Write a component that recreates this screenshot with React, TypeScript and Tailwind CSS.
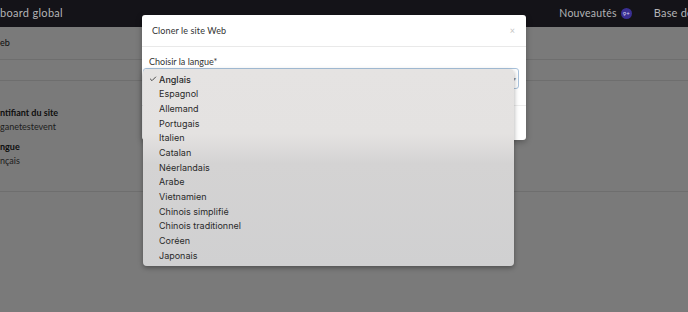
import { Check } from "lucide-react";

const languages = [
  "Anglais",
  "Espagnol",
  "Allemand",
  "Portugais",
  "Italien",
  "Catalan",
  "Néerlandais",
  "Arabe",
  "Vietnamien",
  "Chinois simplifié",
  "Chinois traditionnel",
  "Coréen",
  "Japonais",
];

export default function App() {
  return (
    <div className="relative w-[688px] h-[312px] overflow-hidden bg-white font-['Lato','Noto_Sans',sans-serif]">
      {/* Navbar */}
      <div className="h-[27px] bg-[#141318] flex items-center justify-between text-[11px] text-[#b3b3b6]">
        <span className="tracking-[0.3px]">board global</span>
        <div className="flex items-center gap-[22px] -mr-[5px]">
          <span className="flex items-center gap-[4px] text-[10.5px] tracking-[0.2px]">
            Nouveautés
            <span className="w-[11px] h-[11px] rounded-full bg-[#3a2f93] text-[6px] text-[#d6d3f0] flex items-center justify-center tracking-normal">
              9+
            </span>
          </span>
          <span className="whitespace-nowrap tracking-[0.2px]">Base de</span>
        </div>
      </div>

      {/* Page content */}
      <div className="text-[9px] text-[#222]">
        <div className="h-[33px] flex items-center border-b border-[#e6e6e6]">eb</div>
        <div className="h-[21px] border-b border-[#e6e6e6]"></div>
        <div className="pt-[25px] pb-[24px] border-b border-[#e6e6e6] flex flex-col">
          <span className="font-bold leading-[14px]">ntifiant du site</span>
          <span className="leading-[14px] text-[#444]">ganetestevent</span>
          <span className="font-bold leading-[14px] mt-[6px]">ngue</span>
          <span className="leading-[13px] text-[#444]">nçais</span>
        </div>
      </div>

      {/* Overlay */}
      <div className="absolute left-0 right-0 top-[27px] bottom-0 bg-[#000]/[0.52]"></div>

      {/* Modal */}
      <div className="absolute left-[142px] top-[15px] w-[384px] h-[125px] bg-white rounded-[3px] shadow-[0_2px_6px_rgba(0,0,0,0.3)] flex flex-col">
        <div className="h-[32px] flex items-center justify-between px-[10px] border-b border-[#e9e9e9]">
          <span className="text-[9px] text-[#333] tracking-[0.1px]">Cloner le site Web</span>
          <span className="text-[9px] text-[#c4c4c4] mr-[1px]">×</span>
        </div>
        <div className="px-[7px] pt-[8px]">
          <div className="text-[9px] text-[#333] leading-[13px]">Choisir la langue*</div>
          <div className="h-[21px] w-[376px] -ml-[6px] border border-[#a9c3dd] rounded-[3px] bg-white flex items-center justify-end pr-[2px]">
            <span className="text-[6px] text-[#999]">▾</span>
          </div>
        </div>
        <div className="mt-[16px] border-t border-[#ededed]"></div>
      </div>

      {/* Dropdown list */}
      <div className="absolute left-[143px] top-[69px] w-[371px] h-[197px] rounded-[4px] bg-[linear-gradient(to_bottom,#e5e3e2_0%,#e4e2e1_33%,#d4d3d3_48%,#d0d0d1_100%)] shadow-[0_2px_5px_rgba(0,0,0,0.35)] pt-[3px] font-['Inter','Noto_Sans',sans-serif] text-[9px] text-[#2a2a2a]">
        {languages.map((lang, i) => (
          <div key={lang} className="h-[14.7px] flex items-center">
            <span className="w-[16px] flex justify-end pr-[2px]">
              {i === 0 && <Check className="w-[8px] h-[8px]" strokeWidth={2.5} />}
            </span>
            <span className={i === 0 ? "font-medium" : ""}>{lang}</span>
          </div>
        ))}
      </div>
    </div>
  );
}
